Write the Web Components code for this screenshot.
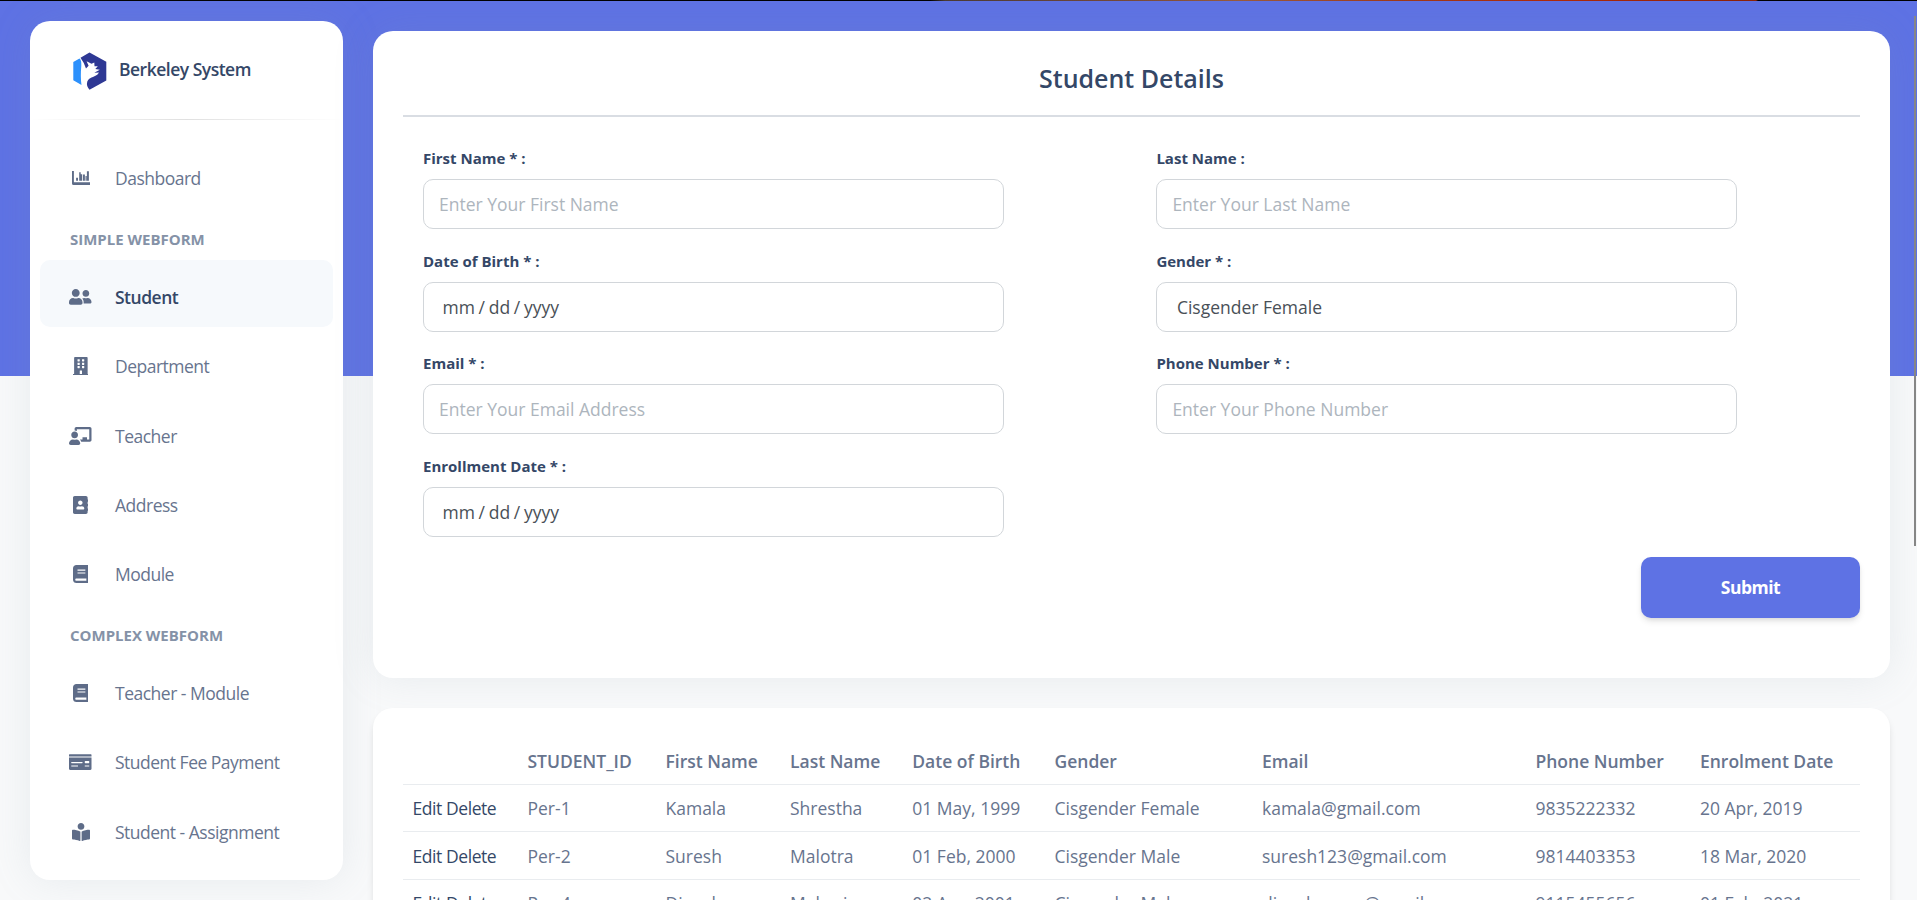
<!DOCTYPE html>
<html lang="en">
<head>
<meta charset="utf-8">
<title>Student Details</title>
<style>
html,body{margin:0;height:900px;overflow:hidden}
body{font-family:"Open Sans","Noto Sans",sans-serif;font-size:20px;color:#67748e;background:#f8f9fa}
</style>
</head>
<body>
<app-shell>
<side-nav slot="nav">
<nav-item icon="chart">Dashboard</nav-item>
<nav-heading>SIMPLE WEBFORM</nav-heading>
<nav-item icon="users" active>Student</nav-item>
<nav-item icon="building">Department</nav-item>
<nav-item icon="teacher">Teacher</nav-item>
<nav-item icon="address">Address</nav-item>
<nav-item icon="book">Module</nav-item>
<nav-heading>COMPLEX WEBFORM</nav-heading>
<nav-item icon="book">Teacher - Module</nav-item>
<nav-item icon="card">Student Fee Payment</nav-item>
<nav-item icon="reader">Student - Assignment</nav-item>
</side-nav>
<form-card>
<form-field label="First Name * :" placeholder>Enter Your First Name</form-field>
<form-field label="Last Name :" placeholder>Enter Your Last Name</form-field>
<form-field label="Date of Birth * :" date>mm / dd / yyyy</form-field>
<form-field label="Gender * :">Cisgender Female</form-field>
<form-field label="Email * :" placeholder>Enter Your Email Address</form-field>
<form-field label="Phone Number * :" placeholder>Enter Your Phone Number</form-field>
<form-field label="Enrollment Date * :" date>mm / dd / yyyy</form-field>
</form-card>
<student-table></student-table>
</app-shell>
<script>
const define = (name, html, init) => customElements.define(name, class extends HTMLElement {
  constructor() {
    super();
    this.attachShadow({ mode: 'open' }).innerHTML = html;
  }
  connectedCallback() { if (init) init(this, this.shadowRoot); }
});

const ICONS = {
  chart: ['0 0 18 18', '<path d="M0 2h1.900V13.300H18V15.900H1.500A1.500 1.500 0 0 1 0 14.400zM4.100 8.700h1.900v3H4.100zM7.200 3.200h1.500v2h1.500v6.500H7.200zM11 5.600h1.900v6.100H11zM13.500 7h1.200v4.700h-1.200zM14.900 2.200h2v9.500h-2z"/>'],
  users: ['0 0 640 512', '<path transform="translate(0 -4)" d="M192 256c61.900 0 112-50.100 112-112S253.900 32 192 32 80 82.100 80 144s50.100 112 112 112zm76.800 32h-8.300c-20.800 10-43.900 16-68.500 16s-47.600-6-68.500-16h-8.300C51.600 288 0 339.600 0 403.200V432c0 26.500 21.500 48 48 48h288c26.500 0 48-21.500 48-48v-28.800c0-63.600-51.600-115.200-115.200-115.200zM480 256c53 0 96-43 96-96s-43-96-96-96-96 43-96 96 43 96 96 96zm48 32h-3.800c-13.900 4.800-28.600 8-44.200 8s-30.300-3.200-44.200-8H432c-20.400 0-39.200 5.900-55.700 15.400 24.400 26.300 39.700 61.200 39.700 99.800v38.400c0 2.200-.5 4.300-.6 6.400H592c26.500 0 48-21.500 48-48 0-61.900-50.100-112-112-112z"/>'],
  building: ['0 0 448 512', '<path d="M436 480h-20V24c0-13.300-10.700-24-24-24H56C42.700 0 32 10.700 32 24v456H12c-6.600 0-12 5.400-12 12v20h448v-20c0-6.600-5.400-12-12-12zM128 76c0-6.600 5.400-12 12-12h40c6.600 0 12 5.400 12 12v40c0 6.600-5.400 12-12 12h-40c-6.600 0-12-5.400-12-12zm0 96c0-6.600 5.400-12 12-12h40c6.600 0 12 5.400 12 12v40c0 6.600-5.400 12-12 12h-40c-6.600 0-12-5.400-12-12zm52 148h-40c-6.600 0-12-5.400-12-12v-40c0-6.600 5.400-12 12-12h40c6.600 0 12 5.400 12 12v40c0 6.600-5.400 12-12 12zm76 160h-64v-84c0-6.600 5.400-12 12-12h40c6.600 0 12 5.400 12 12zm64-172c0 6.600-5.400 12-12 12h-40c-6.600 0-12-5.400-12-12v-40c0-6.600 5.400-12 12-12h40c6.600 0 12 5.400 12 12zm0-96c0 6.600-5.400 12-12 12h-40c-6.600 0-12-5.400-12-12v-40c0-6.600 5.400-12 12-12h40c6.600 0 12 5.400 12 12zm0-96c0 6.600-5.400 12-12 12h-40c-6.600 0-12-5.400-12-12V76c0-6.600 5.400-12 12-12h40c6.600 0 12 5.400 12 12z"/>'],
  teacher: ['0 0 640 512', '<path d="M208 352c-2.400 0-4.800.4-7.100 1.100C188 357.300 174.400 360 160 360s-28-2.700-40.900-6.900c-2.300-.7-4.700-1.100-7.100-1.100C49.900 352-.3 402.500 0 464.600.1 490.900 21.700 512 48 512h224c26.300 0 47.900-21.100 48-47.400.3-62.100-49.900-112.600-112-112.600zm-48-32c53 0 96-43 96-96s-43-96-96-96-96 43-96 96 43 96 96 96zM592 0H208c-26.500 0-48 22.300-48 49.600V96c23.400 0 45.100 6.800 64 17.800V64h352v288h-64v-64H384v64h-76.200c19.100 16.700 33.100 38.700 39.700 64H592c26.500 0 48-22.300 48-49.600V49.600C640 22.300 618.500 0 592 0z"/>'],
  address: ['0 0 448 512', '<path d="M436 160c6.600 0 12-5.400 12-12v-40c0-6.600-5.400-12-12-12h-20V48c0-26.500-21.500-48-48-48H48C21.500 0 0 21.500 0 48v416c0 26.500 21.500 48 48 48h320c26.500 0 48-21.500 48-48v-48h20c6.600 0 12-5.400 12-12v-40c0-6.600-5.400-12-12-12h-20v-64h20c6.600 0 12-5.400 12-12v-40c0-6.600-5.400-12-12-12h-20v-64zm-228-32c35.300 0 64 28.700 64 64s-28.700 64-64 64-64-28.700-64-64 28.700-64 64-64zm112 236.800c0 10.600-10 19.200-22.400 19.200H118.400C106 384 96 375.400 96 364.800v-19.200c0-31.800 30.100-57.600 67.200-57.600h5c12.300 5.100 25.700 8 39.800 8s27.600-2.900 39.800-8h5c37.100 0 67.200 25.800 67.200 57.600z"/>'],
  book: ['0 0 448 512', '<path d="M448 360V24c0-13.300-10.700-24-24-24H96C43 0 0 43 0 96v320c0 53 43 96 96 96h328c13.300 0 24-10.700 24-24v-16c0-7.500-3.500-14.300-8.900-18.700-4.200-15.400-4.200-59.300 0-74.700 5.400-4.300 8.900-11.100 8.900-18.600zM128 134c0-3.300 2.700-6 6-6h212c3.300 0 6 2.700 6 6v20c0 3.300-2.700 6-6 6H134c-3.300 0-6-2.700-6-6zm0 82c0-3.300 2.700-6 6-6h212c3.300 0 6 2.700 6 6v20c0 3.300-2.700 6-6 6H134c-3.300 0-6-2.700-6-6zm253.400 232H96c-17.700 0-32-14.300-32-32s14.400-32 32-32h285.400c-1.900 17.100-1.900 46.900 0 64z"/>'],
  card: ['0 0 640 512', '<path fill-rule="evenodd" d="M0 448c0 17.700 14.300 32 32 32h576c17.700 0 32-14.300 32-32V128H0zm448-208c0-8.800 7.200-16 16-16h96c8.800 0 16 7.200 16 16v32c0 8.800-7.200 16-16 16h-96c-8.800 0-16-7.200-16-16zm0 120c0-4.400 3.600-8 8-8h112c4.400 0 8 3.600 8 8v16c0 4.400-3.600 8-8 8H456c-4.400 0-8-3.600-8-8zM64 264c0-4.400 3.600-8 8-8h304c4.400 0 8 3.600 8 8v16c0 4.400-3.600 8-8 8H72c-4.400 0-8-3.600-8-8zm0 96c0-4.400 3.600-8 8-8h176c4.400 0 8 3.600 8 8v16c0 4.400-3.600 8-8 8H72c-4.400 0-8-3.600-8-8zM624 32H16C7.200 32 0 39.200 0 48v48h640V48c0-8.800-7.200-16-16-16z"/>'],
  reader: ['0 0 512 512', '<path d="M352 96c0-53-43-96-96-96s-96 43-96 96 43 96 96 96 96-43 96-96zM233.600 241.100c-59.300-36.300-155.400-46.900-203.800-49.100C13.600 191.200 0 203.500 0 219.100v222.800c0 14.300 11.600 26.300 26.500 27 43.700 2.100 131.500 12 191.800 43 9.300 4.800 20.200-1.500 20.200-11.600V249.800c0-3.500-1.800-6.800-4.900-8.700zM482.200 192c-48.400 2.300-144.500 12.800-203.700 49.100-3.100 1.900-4.900 5.300-4.900 8.800v250.300c0 10.100 10.900 16.300 20.200 11.500 60.300-31 148-40.900 191.700-43 14.900-.7 26.500-12.700 26.500-27V219.100c0-15.600-13.600-27.900-29.800-27.100z"/>']
};

define('app-shell', `<style>
:host{display:block;position:relative;height:900px;overflow:hidden;background:linear-gradient(#5e72e4,#5e72e4) 0 0/100% 376px no-repeat #f8f9fa}
.strip{height:1px;background:linear-gradient(90deg,#000 0,#000 930px,#4a3a34 945px,#76493a 1130px,#9a5a3c 1240px,#a03818 1400px,#b02808 1560px,#8a2008 1756px,#000 1758px)}
.layout{display:flex;align-items:flex-start;gap:30px;padding:20px 27px 0 30px}
main{flex:1;min-width:0;padding-top:10px;display:flex;flex-direction:column;gap:30px}
.scroll{position:absolute;right:1px;top:16px;width:2px;height:530px;background:#868686}
</style><div class="strip"></div><div class="layout"><slot name="nav"></slot><main><slot></slot></main></div><div class="scroll"></div>`);

define('side-nav', `<style>
:host{display:block;box-sizing:border-box;width:313px;height:859px;flex:none;background:#fff;border-radius:20px;box-shadow:0 0 40px rgba(136,152,170,.15)}
.brand{display:flex;align-items:center;height:98px;padding-left:43px;box-sizing:border-box;color:#344767;font-weight:600;font-size:17.5px;letter-spacing:-.5px}
.brand svg{width:34px;height:38px;margin-right:12px;margin-top:2px}
.brand span{margin-top:-2px}
.rule{height:1px;background:linear-gradient(90deg,transparent,rgba(0,0,0,.12),transparent);margin-bottom:22px}
</style><div class="brand"><svg viewBox="0 0 34 38"><path d="M.3 10 6.500 6.400Q8.700 8 8.300 14 7.300 25 8.500 32.900L.3 28.300z" fill="#2c90fc"/><path d="M7.500 5.800 16.500.4 33.300 9.700V28.500L16.500 37.700Q13 34 14.300 29.500C16 25.500 20.500 25.300 24.500 22.500L26 20.500 21.300 20.800 26.800 17.800 22.300 17 24.800 14.300 21.500 14.200 21.300 10.600 18.500 11.800 13.600 9.200 15.600 13.800 13 16.500Q11 10.500 7.500 5.800z" fill="#2e3894"/></svg><span>Berkeley System</span></div><div class="rule"></div><slot></slot>`);

define('nav-heading', `<style>
:host{display:flex;align-items:center;box-sizing:border-box;height:49px;padding:5.400px 0 0 40px;font-size:15px;line-height:20px;font-weight:700;color:#8592a7}
</style><slot></slot>`);

define('nav-item', `<style>
:host{display:flex;align-items:center;box-sizing:border-box;height:67px;margin:0 10px 2.450px;padding:5.400px 0 0 30px;border-radius:10px;font-size:17.500px;letter-spacing:-.5px;color:#67748e}
:host([active]){background:#f6f9fc;color:#344767;font-weight:600}
i{display:flex;width:23px;height:20px;justify-content:center;align-items:center;margin:0 23px 0 -1px;flex:none}
svg{height:18px;fill:#5e6c88}
</style><i></i><span><slot></slot></span>`, (el, root) => {
  const [box, art] = ICONS[el.getAttribute('icon')];
  root.querySelector('i').innerHTML = `<svg viewBox="${box}">${art}</svg>`;
});

define('form-card', `<style>
:host{display:flex;flex-direction:column;box-sizing:border-box;height:647px;padding:30px 30px 0;background:#fff;border-radius:20px;box-shadow:0 0 40px rgba(136,152,170,.15)}
h2{margin:0;height:54px;font-size:25px;line-height:35px;font-weight:600;color:#344767;text-align:center;border-bottom:2px solid #d9dde3}
.grid{display:grid;grid-template-columns:581px 581px;column-gap:152.400px;grid-auto-rows:102.600px;padding:30px 20px 0}
button{align-self:flex-end;width:219px;height:61px;padding:0 0 2px;border:0;border-radius:10px;background:#5e72e4;color:#fff;font:700 17.500px "Open Sans",sans-serif;letter-spacing:-.5px;box-shadow:0 4px 7px -1px rgba(0,0,0,.11),0 2px 4px -1px rgba(0,0,0,.07)}
</style><h2>Student Details</h2><div class="grid"><slot></slot></div><button>Submit</button>`);

define('form-field', `<style>
:host{display:block}
label{display:block;height:32px;line-height:22px;font-size:15px;font-weight:700;color:#344767}
.box{display:flex;align-items:center;box-sizing:border-box;height:50px;border:1px solid #d2d6da;border-radius:10px;padding:0 19.500px;font-size:17.500px;color:#495057}
:host([date]) .box{padding-left:18.500px;word-spacing:-.85px}
:host([placeholder]) .box{padding:0 15px;color:#adb5bd}
</style><label></label><div class="box"><span><slot></slot></span></div>`, (el, root) => {
  root.querySelector('label').textContent = el.getAttribute('label');
});

const ROWS = [
  ['Per-1', 'Kamala', 'Shrestha', '01 May, 1999', 'Cisgender Female', 'kamala@gmail.com', '9835222332', '20 Apr, 2019'],
  ['Per-2', 'Suresh', 'Malotra', '01 Feb, 2000', 'Cisgender Male', 'suresh123@gmail.com', '9814403353', '18 Mar, 2020'],
  ['Per-4', 'Dinesh', 'Maharjan', '02 Apr, 2001', 'Cisgender Male', 'dineshmann@gmail.com', '9115455656', '01 Feb, 2021']
];
define('student-table', `<style>
:host{display:block;height:300px;padding:30px;background:#fff;border-radius:20px;box-shadow:0 5px 7px -1px rgba(0,0,0,.13)}
.row{display:grid;grid-template-columns:115px 138px 124.500px 122.300px 142.200px 207.500px 273.500px 164.500px 1fr;align-items:center;box-sizing:border-box;height:48px;padding-left:9.500px;border-bottom:1px solid #e9ecef;font-size:17.500px;white-space:nowrap}
.row:nth-of-type(-n+2){height:47px}
.row:last-child{height:46px}
.head{font-weight:600}
.act{color:#344767;letter-spacing:-.43px}
</style><div class="row head"><span></span>${['STUDENT_ID', 'First Name', 'Last Name', 'Date of Birth', 'Gender', 'Email', 'Phone Number', 'Enrolment Date'].map(t => `<span>${t}</span>`).join('')}</div>${ROWS.map(r => `<div class="row"><span class="act"><a>Edit</a> <a>Delete</a></span>${r.map(t => `<span>${t}</span>`).join('')}</div>`).join('')}`);
</script>
</body>
</html>
